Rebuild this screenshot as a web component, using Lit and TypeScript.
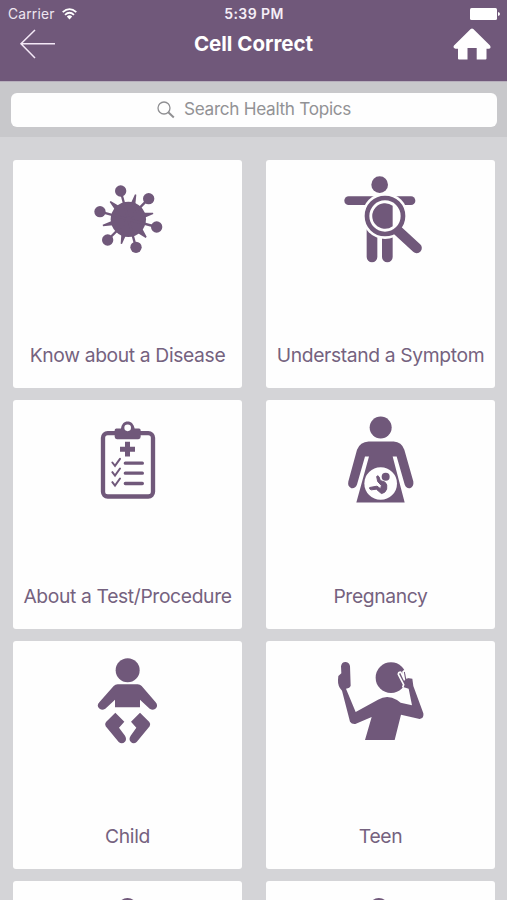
import { LitElement, html, css, svg, nothing } from "lit";
import { customElement, property } from "lit/decorators.js";

const icons: Record<string, unknown> = {
  disease: svg`<g transform="translate(22.5 15)">
    <circle cx="130" cy="133" r="53"/>
    <g stroke="currentColor" stroke-width="7">
      <path d="M130 133L107 48M130 133L191 71M130 133L45 110M130 133L215 156M130 133L68 195M130 133L153 217"/>
    </g>
    <circle cx="107" cy="48" r="17"/><circle cx="191" cy="71" r="17"/><circle cx="45" cy="110" r="17"/>
    <circle cx="215" cy="156" r="17"/><circle cx="68" cy="195" r="17"/><circle cx="153" cy="217" r="17"/>
    <path d="M150 58L154 59L151 88L138 84ZM204 113L205 117L179 128L176 113ZM185 185L182 189L158 174L172 161ZM111 207L107 206L109 178L122 182ZM54 154L53 149L80 138L84 151ZM74 81L77 78L101 92L90 104Z"/>
  </g>`,
  symptom: svg`<g transform="translate(13.5 0)">
    <circle cx="134" cy="44" r="25"/>
    <path d="M41 79H228a13 13 0 0 1 0 26H41a13 13 0 0 1 0-26Z"/>
    <path d="M95 170H127V261a16 16 0 0 1-32 0ZM141 170H173V261a16 16 0 0 1-32 0Z"/>
    <path d="M188 179L210 200" stroke="#fefefe" stroke-width="42"/>
    <circle cx="150" cy="138" r="69" fill="#fefefe"/>
    <path d="M183 177L245 234" stroke="currentColor" stroke-width="31" stroke-linecap="round"/>
    <circle cx="150" cy="138" r="54" fill="#fefefe" stroke="currentColor" stroke-width="14"/>
    <path d="M173 107V169A38.500 38.500 0 1 1 173 107Z"/>
  </g>`,
  clipboard: svg`<g transform="translate(22.5 4.5)">
    <rect x="54" y="65" width="150" height="190" rx="14" fill="none" stroke="currentColor" stroke-width="13"/>
    <path d="M94 51H108C110 38 117 30 128 30S146 38 149 51H162Q167 51 167 56V76Q167 83 160 83H96Q89 83 89 76V56Q89 51 94 51Z"/>
    <circle cx="128" cy="49" r="10" fill="#fefefe"/>
    <path d="M120 91H135V106H150V121H135V135H120V121H105V106H120Z"/>
    <g fill="none" stroke="currentColor" stroke-linecap="round">
      <path stroke-width="10" d="M121 155H172M121 185H172M121 216H172"/>
      <path stroke-width="6" d="M82 153L90 163L105 142M82 182L90 192L105 171M82 212L90 222L105 201"/>
    </g>
  </g>`,
  pregnancy: svg`<g transform="translate(13.5 -1.5)">
    <circle cx="137" cy="54" r="33"/>
    <path d="M101 96H176Q200 97 208 121L235 216Q237 232 225 236Q214 238 209 225L185 141H173L209 279H64L102 141H90L66 225Q61 238 49 236Q37 231 40 216L66 121Q75 97 101 96Z"/>
    <circle cx="137" cy="222" r="49" fill="#fefefe"/>
    <circle cx="152" cy="202" r="12"/>
    <path d="M150 218Q158 224 155 239Q151 251 139 252L124 239L109 241Q102 239 104 234L126 230L137 238L139 228L128 216L125 201Q129 196 132 202L136 213Z" stroke="currentColor" stroke-width="3" stroke-linejoin="round"/>
  </g>`,
  child: svg`<g transform="translate(22.5 -3)">
    <circle cx="128" cy="61" r="36"/>
    <path d="M98 103H158Q165 103 170 108L212 157Q220 167 213 175Q205 183 194 176L165 149V172H90V149L61 176Q50 183 42 175Q34 167 43 157L86 108Q91 103 98 103Z"/>
    <path d="M91 188L118 215L102 233L120 257Q126 267 120 275Q111 284 101 276L62 229Q58 222 63 216ZM165 188L193 216Q198 222 194 229L155 276Q145 284 137 275Q130 267 137 257L154 233L138 215Z"/>
  </g>`,
  teen: svg`<g transform="translate(-1.5 3)">
    <circle cx="183" cy="77" r="46"/>
    <path d="M33 43Q35 30 46 30Q57 30 60 42L62 101Q60 108 48 110L77 180L144 143Q172 126 201 144L212 152L246 160L236 110L219 105L211 84L204 65L219 56L232 78L247 80L250 102L280 184Q283 199 269 201L213 188L194 264H105L125 195L76 216Q65 217 60 209L36 116Q23 104 24 84L25 72L34 64Z"/>
    <path d="M218 106L221 98L205 67Q205 60 212 60L223 83L219 60Q223 54 227 59L231 80" fill="none" stroke="#fefefe" stroke-width="5" stroke-linejoin="round"/>
  </g>`,
  headLeft: svg`<circle cx="150" cy="51" r="30"/>`,
  headRight: svg`<circle cx="145" cy="51" r="30"/>`,
};

@customElement("topic-card")
class TopicCard extends LitElement {
  @property() icon = "";
  @property() label = "";

  static styles = css`
    :host {
      display: flex;
      flex-direction: column;
      align-items: center;
      justify-content: space-between;
      box-sizing: border-box;
      height: 228.5px;
      padding: 10px 0 20px;
      border-radius: 3px;
      background: #fefefe;
      color: #70587a;
    }
    .icon { display: block; width: 100px; height: 100px; fill: currentColor; }
    .label { font-size: 19.3px; letter-spacing: -0.36px; line-height: 26px; white-space: nowrap; color: #75627f; }
  `;

  render() {
    return html`
      <svg class="icon" viewBox="1.5 0 300 300">${icons[this.icon]}</svg>
      ${this.label ? html`<span class="label">${this.label}</span>` : nothing}
    `;
  }
}

@customElement("app-root")
class AppRoot extends LitElement {
  static styles = css`
    :host {
      display: flex;
      flex-direction: column;
      height: 900px;
      overflow: hidden;
      background: #d4d4d7;
      font-family: Inter, "Liberation Sans", sans-serif;
    }
    .header { flex: none; height: 81px; background: #70587a; color: #fff; border-bottom: 1px solid #b7afbc; box-sizing: content-box; }
    .status { display: grid; grid-template-columns: 1fr auto 1fr; align-items: center; height: 27px; padding: 0 7px 0 8px; font-size: 13.8px; }
    .carrier { display: flex; align-items: center; gap: 7px; color: #eee6f1; letter-spacing: 0.2px; }
    .time { font-weight: 600; font-size: 14px; letter-spacing: 0.4px; color: #f5eef7; }
    .battery { justify-self: end; }
    .nav { display: grid; grid-template-columns: 1fr auto 1fr; align-items: center; height: 34px; padding: 0 16px 0 16px; }
    .back { margin-left: 3px; }
    .title { font-size: 20.5px; font-weight: 700; margin: 0; line-height: 34px; }
    .home { justify-self: end; }
    svg { display: block; }
    .searchbar { flex: none; box-sizing: border-box; height: 55px; padding: 11px 10px 10px 11px; background: #c8c8cb; }
    .field { display: flex; align-items: center; justify-content: center; gap: 9px; height: 34px; border-radius: 6px; background: #fefefe; color: #929295; font-size: 17.2px; letter-spacing: -0.3px; }
    .field span { line-height: 20px; padding-bottom: 2px; }
    .grid { display: grid; grid-template-columns: 229px 229px; column-gap: 24px; row-gap: 12px; padding: 22.5px 12px 0 13px; }
  `;

  private topics = [
    ["disease", "Know about a Disease"],
    ["symptom", "Understand a Symptom"],
    ["clipboard", "About a Test/Procedure"],
    ["pregnancy", "Pregnancy"],
    ["child", "Child"],
    ["teen", "Teen"],
    ["headLeft", ""],
    ["headRight", ""],
  ];

  render() {
    return html`
      <header class="header">
        <div class="status">
          <span class="carrier">Carrier
            <svg width="15" height="12" viewBox="0 0 15 12" fill="none" stroke="#fff" stroke-width="1.8">
              <path d="M.7 4.200Q7.500-2 14.300 4.200M3 6.800Q7.500 2.800 12 6.800"/>
              <path d="M4.800 8.500Q7.500 6.200 10.200 8.500L7.500 11.500Z" fill="#fff" stroke="none"/>
            </svg>
          </span>
          <span class="time">5:39 PM</span>
          <svg class="battery" width="30" height="12" viewBox="0 0 30 12" fill="#fff">
            <rect width="27" height="12" rx="1.5"/><path d="M28 4Q30 4.500 30 6T28 8Z"/>
          </svg>
        </div>
        <div class="nav">
          <svg class="back" width="37" height="30" viewBox="0 0 37 30" fill="none" stroke="#f4e8f7" stroke-width="1.500">
            <path d="M16 1L2 14.700L16 29M2 14.700H36"/>
          </svg>
          <h1 class="title">Cell Correct</h1>
          <svg class="home" width="38" height="32" viewBox="0 0 38 32" fill="#fff">
            <path d="M17.700.9Q19 0 20.300.9L37 17.500Q38.500 20 36 20.800H33.500V30.500Q33.500 31.500 32.500 31.500H23.700V20H14.500V31.500H6Q5 31.500 5 30.500V20.800H2.500Q-.5 20 1 17.500Z"/>
          </svg>
        </div>
      </header>
      <div class="searchbar">
        <div class="field">
          <svg width="18" height="18" viewBox="0 0 18 18" fill="none" stroke="#8f8f92">
            <circle cx="7" cy="7" r="6" stroke-width="1.300"/><path d="M11.300 11.300L16.800 16.500" stroke-width="2"/>
          </svg>
          <span>Search Health Topics</span>
        </div>
      </div>
      <main class="grid">
        ${this.topics.map(([icon, label]) => html`<topic-card .icon=${icon} .label=${label}></topic-card>`)}
      </main>
    `;
  }
}
